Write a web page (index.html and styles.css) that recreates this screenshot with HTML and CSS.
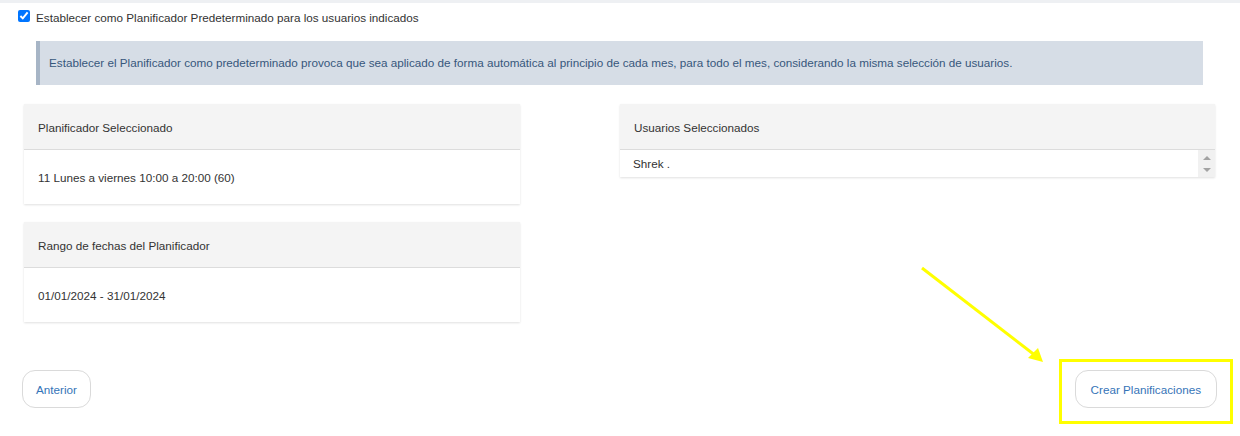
FILE: index.html
```html
<!DOCTYPE html>
<html lang="es">
<head>
  <meta charset="UTF-8">
  <title>Planificador</title>
  <link rel="stylesheet" href="styles.css">
</head>
<body>

  <div class="page">
    <label class="check-row">
      <input type="checkbox" checked>
      <span>Establecer como Planificador Predeterminado para los usuarios indicados</span>
    </label>

    <div class="alert">
      Establecer el Planificador como predeterminado provoca que sea aplicado de forma automática al principio de cada mes, para todo el mes, considerando la misma selección de usuarios.
    </div>

    <div class="grid">
      <div class="col">
        <div class="card">
          <div class="card-header">Planificador Seleccionado</div>
          <div class="card-body">11 Lunes a viernes 10:00 a 20:00 (60)</div>
        </div>
        <div class="card">
          <div class="card-header">Rango de fechas del Planificador</div>
          <div class="card-body">01/01/2024 - 31/01/2024</div>
        </div>
      </div>

      <div class="col">
        <div class="card">
          <div class="card-header">Usuarios Seleccionados</div>
          <div class="user-list">
            <div class="user-item">Shrek .</div>
            <div class="scroll">
              <span class="arrow-up"></span>
              <span class="arrow-down"></span>
            </div>
          </div>
        </div>
      </div>
    </div>

    <div class="actions">
      <button class="btn">Anterior</button>
      <button class="btn">Crear Planificaciones</button>
    </div>
  </div>

  <!-- annotation overlay -->
  <svg class="overlay" width="1240" height="436" viewBox="0 0 1240 436">
    <line x1="922" y1="268" x2="1036" y2="356" stroke="#ffff00" stroke-width="3"/>
    <polygon points="1043,362 1028,358 1038,348" fill="#ffff00"/>
    <rect x="1060.5" y="360.5" width="171" height="62" fill="none" stroke="#ffff00" stroke-width="3"/>
  </svg>

</body>
</html>
```

FILE: styles.css
```css
body {
  margin: 0;
  border-top: 3px solid #eef0f3;
  background: #fff;
  font-family: "Liberation Sans", Arial, sans-serif;
  font-size: 11.7px;
  color: #333;
  position: relative;
  height: 433px;
  overflow: hidden;
}

.check-row {
  display: flex;
  align-items: flex-start;
  gap: 6px;
  padding: 7px 0 0 18px;
  height: 14px;
}

.check-row input {
  width: 12px;
  height: 12px;
  margin: 0;
  accent-color: #0075ff;
}

.check-row span {
  padding-top: 2px;
  line-height: 12px;
}

.alert {
  margin: 17px 37px 0 36px;
  height: 44px;
  line-height: 44px;
  padding: 0 9px;
  background: #d6dde6;
  border-left: 4px solid #a7b5c6;
  color: #36577c;
  white-space: nowrap;
}

.grid {
  display: grid;
  grid-template-columns: 496px 595px;
  column-gap: 100px;
  padding-left: 24px;
  margin-top: 19px;
}

.col {
  display: flex;
  flex-direction: column;
  gap: 18px;
}

.card {
  background: #fff;
  box-shadow: 0 1px 2px rgba(0,0,0,0.12);
}

.card-header {
  height: 45px;
  line-height: 47px;
  padding-left: 14px;
  background: #f4f4f4;
  border-bottom: 1px solid #dcdcdc;
}

.card-body {
  height: 54px;
  line-height: 56px;
  padding-left: 14px;
}

.user-list {
  display: flex;
  height: 27px;
}

.user-item {
  flex: 1;
  line-height: 27px;
  padding-left: 13px;
}

.scroll {
  width: 17px;
  background: #f1f1f1;
  display: flex;
  flex-direction: column;
  align-items: center;
  justify-content: space-between;
  padding: 6px 0 5px;
  box-sizing: border-box;
}

.arrow-up,
.arrow-down {
  width: 0;
  height: 0;
  border-left: 4px solid transparent;
  border-right: 4px solid transparent;
}

.arrow-up {
  border-bottom: 4px solid #a3a3a3;
}

.arrow-down {
  border-top: 4px solid #a3a3a3;
}

.actions {
  display: flex;
  justify-content: space-between;
  padding: 0 23px 0 22px;
  margin-top: 48px;
}

.btn {
  height: 38px;
  padding: 0 13px;
  background: #fff;
  border: 1px solid #dadada;
  border-radius: 13px;
  color: #3574b8;
  font-family: "Liberation Sans", Arial, sans-serif;
  font-size: 11.7px;
  cursor: pointer;
}

.btn:last-child {
  padding: 0 15px;
}

.overlay {
  position: absolute;
  top: -3px;
  left: 0;
  pointer-events: none;
}
```
